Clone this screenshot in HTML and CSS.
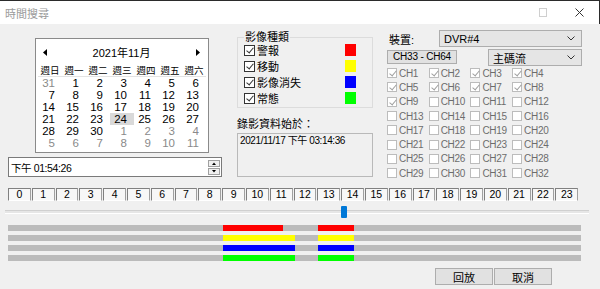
FILE: index.html
```html
<!DOCTYPE html>
<html lang="zh-Hant">
<head>
<meta charset="UTF-8">
<title>時間搜尋</title>
<link rel="stylesheet" href="styles.css">
</head>
<body>
<div class="titlebar">
    <span class="title">時間搜尋</span>
    <svg class="max" width="8" height="9" viewBox="0 0 8 9"><rect x="0.5" y="0.5" width="7" height="8" fill="none" stroke="#cfcfcf"/></svg>
    <svg class="close" width="9" height="9" viewBox="0 0 9 9"><path d="M0.5 0.5L8.5 8.5M8.5 0.5L0.5 8.5" stroke="#333" stroke-width="1"/></svg>
</div>

<div class="top">
    <div class="left">
        <div class="calendar">
            <div class="cal-head">
                <svg width="4" height="7" viewBox="0 0 4 7"><path d="M4 0L0 3.5L4 7Z" fill="#000"/></svg>
                <span>2021年11月</span>
                <svg width="4" height="7" viewBox="0 0 4 7"><path d="M0 0L4 3.5L0 7Z" fill="#000"/></svg>
            </div>
            <div class="cal-week">
                <span>週日</span><span>週一</span><span>週二</span><span>週三</span><span>週四</span><span>週五</span><span>週六</span>
            </div>
            <div class="cal-days">
                <span class="other">31</span><span>1</span><span>2</span><span>3</span><span>4</span><span>5</span><span>6</span>
                <span>7</span><span>8</span><span>9</span><span>10</span><span>11</span><span>12</span><span>13</span>
                <span>14</span><span>15</span><span>16</span><span>17</span><span>18</span><span>19</span><span>20</span>
                <span>21</span><span>22</span><span>23</span><span class="today">24</span><span>25</span><span>26</span><span>27</span>
                <span>28</span><span>29</span><span>30</span><span class="other">1</span><span class="other">2</span><span class="other">3</span><span class="other">4</span>
                <span class="other">5</span><span class="other">6</span><span class="other">7</span><span class="other">8</span><span class="other">9</span><span class="other">10</span><span class="other">11</span>
            </div>
        </div>
        <div class="timefield">
            <span>下午 01:54:26</span>
            <span class="spin">
                <svg width="12" height="7" viewBox="0 0 12 7"><rect x="0.5" y="0.5" width="11" height="6" fill="#f0f0f0" stroke="#a0a0a0"/><path d="M4 5H8L6 2.5Z" fill="#000"/></svg>
                <svg width="12" height="7" viewBox="0 0 12 7"><rect x="0.5" y="0.5" width="11" height="6" fill="#f0f0f0" stroke="#a0a0a0"/><path d="M4 2H8L6 4.5Z" fill="#000"/></svg>
            </span>
        </div>
    </div>

    <div class="mid">
        <fieldset class="types">
            <legend>影像種類</legend>
            <div class="type-list">
                <div class="type"><span class="cb on"></span><span class="name">警報</span><span class="swatch red"></span></div>
                <div class="type"><span class="cb on"></span><span class="name">移動</span><span class="swatch yellow"></span></div>
                <div class="type"><span class="cb on"></span><span class="name">影像消失</span><span class="swatch blue"></span></div>
                <div class="type"><span class="cb on"></span><span class="name">常態</span><span class="swatch green"></span></div>
            </div>
        </fieldset>
        <div class="since-label">錄影資料始於：</div>
        <div class="since">2021/11/17 下午 03:14:36</div>
    </div>

    <div class="right">
        <div class="device">
            <label>裝置:</label>
            <div class="combo">
                <span>DVR#4</span>
                <svg width="8" height="5" viewBox="0 0 8 5"><path d="M0.5 0.5L4 4L7.5 0.5" fill="none" stroke="#333"/></svg>
            </div>
        </div>
        <div class="row2">
            <div class="btn-range">CH33 - CH64</div>
            <div class="combo stream">
                <span>主碼流</span>
                <svg width="8" height="5" viewBox="0 0 8 5"><path d="M0.5 0.5L4 4L7.5 0.5" fill="none" stroke="#333"/></svg>
            </div>
        </div>
        <div class="channels">
            <div class="ch"><span class="cb on"></span>CH1</div>
            <div class="ch"><span class="cb on"></span>CH2</div>
            <div class="ch"><span class="cb on"></span>CH3</div>
            <div class="ch"><span class="cb on"></span>CH4</div>
            <div class="ch"><span class="cb on"></span>CH5</div>
            <div class="ch"><span class="cb on"></span>CH6</div>
            <div class="ch"><span class="cb on"></span>CH7</div>
            <div class="ch"><span class="cb on"></span>CH8</div>
            <div class="ch"><span class="cb on"></span>CH9</div>
            <div class="ch"><span class="cb"></span>CH10</div>
            <div class="ch"><span class="cb"></span>CH11</div>
            <div class="ch"><span class="cb"></span>CH12</div>
            <div class="ch"><span class="cb"></span>CH13</div>
            <div class="ch"><span class="cb"></span>CH14</div>
            <div class="ch"><span class="cb"></span>CH15</div>
            <div class="ch"><span class="cb"></span>CH16</div>
            <div class="ch"><span class="cb"></span>CH17</div>
            <div class="ch"><span class="cb"></span>CH18</div>
            <div class="ch"><span class="cb"></span>CH19</div>
            <div class="ch"><span class="cb"></span>CH20</div>
            <div class="ch"><span class="cb"></span>CH21</div>
            <div class="ch"><span class="cb"></span>CH22</div>
            <div class="ch"><span class="cb"></span>CH23</div>
            <div class="ch"><span class="cb"></span>CH24</div>
            <div class="ch"><span class="cb"></span>CH25</div>
            <div class="ch"><span class="cb"></span>CH26</div>
            <div class="ch"><span class="cb"></span>CH27</div>
            <div class="ch"><span class="cb"></span>CH28</div>
            <div class="ch"><span class="cb"></span>CH29</div>
            <div class="ch"><span class="cb"></span>CH30</div>
            <div class="ch"><span class="cb"></span>CH31</div>
            <div class="ch"><span class="cb"></span>CH32</div>
        </div>
    </div>
</div>

<div class="hours">
    <span>0</span><span>1</span><span>2</span><span>3</span><span>4</span><span>5</span><span>6</span><span>7</span>
    <span>8</span><span>9</span><span>10</span><span>11</span><span>12</span><span>13</span><span>14</span><span>15</span>
    <span>16</span><span>17</span><span>18</span><span>19</span><span>20</span><span>21</span><span>22</span><span>23</span>
</div>

<div class="slider">
    <div class="track"><span class="thumb" style="left:336px"></span></div>
</div>

<div class="bars">
    <div class="bar"><span class="seg red" style="left:215px;width:60px"></span><span class="seg red" style="left:310px;width:36px"></span></div>
    <div class="bar"><span class="seg yellow" style="left:215px;width:72px"></span><span class="seg yellow" style="left:310px;width:36px"></span></div>
    <div class="bar"><span class="seg blue" style="left:215px;width:72px"></span><span class="seg blue" style="left:310px;width:36px"></span></div>
    <div class="bar"><span class="seg green" style="left:215px;width:72px"></span><span class="seg green" style="left:310px;width:36px"></span></div>
</div>

<div class="actions">
    <button>回放</button>
    <button>取消</button>
</div>
</body>
</html>
```

FILE: styles.css
```css
*{
    margin: 0;
    padding: 0;
    box-sizing: border-box;
}

body{
    width: 600px;
    height: 289px;
    overflow: hidden;
    background: #f0f0f0;
    font-family: "Liberation Sans", "Noto Sans CJK TC", sans-serif;
    font-size: 11px;
    color: #000;
}

/* title bar */
.titlebar{
    height: 24px;
    display: flex;
    align-items: center;
    padding-left: 5px;
    background: #fff;
    border-top: 1px solid #2b2b2b;
    border-right: 1px solid #2b2b2b;
}

.titlebar .title{
    flex: 1;
    color: #9a9a9a;
}

.titlebar .max{
    margin-right: 28px;
}

.titlebar .close{
    margin-right: 15px;
}

/* upper part */
.top{
    display: flex;
    height: 164px;
    padding-left: 8px;
}

.left{
    width: 214px;
}

.calendar{
    width: 174px;
    height: 115px;
    margin: 14px 0 0 27px;
    padding: 0 2px;
    background: #fff;
    border: 1px solid #8a8a8a;
}

.cal-head{
    height: 24px;
    display: flex;
    align-items: center;
    justify-content: space-between;
    padding: 2px 6px 0 5px;
}

.cal-week{
    display: grid;
    grid-template-columns: repeat(7, 24px);
    height: 14px;
    align-items: center;
    text-align: center;
    font-size: 9.5px;
    border-bottom: 1px solid #e3e3e3;
}

.cal-days{
    display: grid;
    grid-template-columns: repeat(7, 24px);
    grid-auto-rows: 12px;
    line-height: 12px;
    text-align: right;
    font-size: 11.5px;
}

.cal-days span{
    padding-right: 7px;
}

.cal-days .other{
    color: #8a8a8a;
}

.cal-days .today{
    background: #d9d9d9;
}

.timefield{
    height: 20px;
    margin-top: 4px;
    display: flex;
    align-items: center;
    justify-content: space-between;
    padding: 0 1px 0 2px;
    font-size: 10.5px;
    letter-spacing: -0.4px;
    background: #fff;
    border: 1px solid #7a7a7a;
}

.spin{
    display: flex;
    flex-direction: column;
    gap: 1px;
}

.spin svg{
    display: block;
}

/* middle */
.mid{
    width: 136px;
    margin-left: 15px;
    padding-top: 6px;
}

.types{
    height: 78px;
    padding: 0 0 0 6px;
    border: 1px solid #dcdcdc;
}

.types legend{
    padding: 0 1px;
    line-height: 14px;
}

.type-list{
    margin-top: -2px;
}

.type{
    height: 16px;
    display: flex;
    align-items: center;
}

.type .name{
    flex: 1;
    margin-left: 2px;
}

.swatch{
    width: 11px;
    height: 12px;
    margin-right: 16px;
}

.red{ background: #ff0000; }
.yellow{ background: #ffff00; }
.blue{ background: #0000ff; }
.green{ background: #00ff00; }

.since-label{
    margin-top: 9px;
    line-height: 14px;
}

.since{
    height: 44px;
    margin-top: 2px;
    padding: 1px 2px;
    line-height: 12px;
    font-size: 10px;
    letter-spacing: -0.4px;
    border: 1px solid #b9b9b9;
}

/* checkboxes */
.cb{
    position: relative;
    flex: none;
    width: 11px;
    height: 11px;
    background: #fff;
    border: 1px solid #333;
}

.cb.on::after{
    content: "";
    position: absolute;
    left: 3px;
    top: 0;
    width: 3px;
    height: 6px;
    border: solid #333;
    border-width: 0 1px 1px 0;
    transform: rotate(40deg);
}

/* right */
.right{
    width: 195px;
    margin-left: 14px;
    padding-top: 6px;
}

.device{
    height: 17px;
    display: flex;
    align-items: center;
}

.device label{
    width: 52px;
    padding-left: 2px;
}

.combo{
    flex: 1;
    height: 17px;
    display: flex;
    align-items: center;
    justify-content: space-between;
    padding: 0 6px 0 4px;
    background: #e5e5e5;
    border: 1px solid #adadad;
}

.row2{
    display: flex;
    align-items: flex-start;
    margin-top: 2px;
}

.btn-range{
    width: 70px;
    height: 14px;
    margin-top: 1px;
    line-height: 12px;
    text-align: center;
    font-size: 10px;
    letter-spacing: -0.2px;
    background: #e1e1e1;
    border: 1px solid #adadad;
}

.combo.stream{
    flex: none;
    width: 94px;
    margin-left: 31px;
}

.channels{
    display: grid;
    grid-template-columns: repeat(4, 41.7px);
    grid-auto-rows: 14.3px;
}

.ch{
    display: flex;
    align-items: center;
    gap: 2px;
    font-size: 10px;
    letter-spacing: -0.3px;
    color: #6d6d6d;
}

.ch .cb{
    width: 10px;
    height: 10px;
    border-color: #bcbcbc;
}

.ch .cb.on::after{
    border-color: #a0a0a0;
    left: 3px;
}

/* hour scale */
.hours{
    display: grid;
    grid-template-columns: repeat(24, 23.8px);
    height: 13px;
    margin-left: 8px;
    font-size: 10.5px;
}

.hours span{
    margin-right: 1px;
    line-height: 11px;
    text-align: center;
    background: #f7f7f7;
    border: 1px solid;
    border-color: #808080 #a0a0a0 #fff #808080;
}

.slider{
    height: 24px;
    padding: 9px 0 0 5px;
}

.track{
    position: relative;
    width: 584px;
    height: 4px;
    background: #e6e6e6;
    border-top: 1px solid #d0d0d0;
    border-bottom: 1px solid #fff;
}

.thumb{
    position: absolute;
    top: -5px;
    width: 6px;
    height: 12px;
    background: #0078d7;
    border-radius: 1px;
}

/* timeline bars */
.bars{
    width: 573px;
    margin-left: 8px;
    display: flex;
    flex-direction: column;
    gap: 4px;
}

.bar{
    position: relative;
    height: 6px;
    background: #bbbbbb;
}

.seg{
    position: absolute;
    top: 0;
    bottom: 0;
}

.actions{
    display: flex;
    justify-content: flex-end;
    gap: 1px;
    margin-top: 7px;
    padding-right: 48px;
}

.actions button{
    width: 58px;
    height: 17px;
    font: inherit;
    background: #e1e1e1;
    border: 1px solid #adadad;
}
```
